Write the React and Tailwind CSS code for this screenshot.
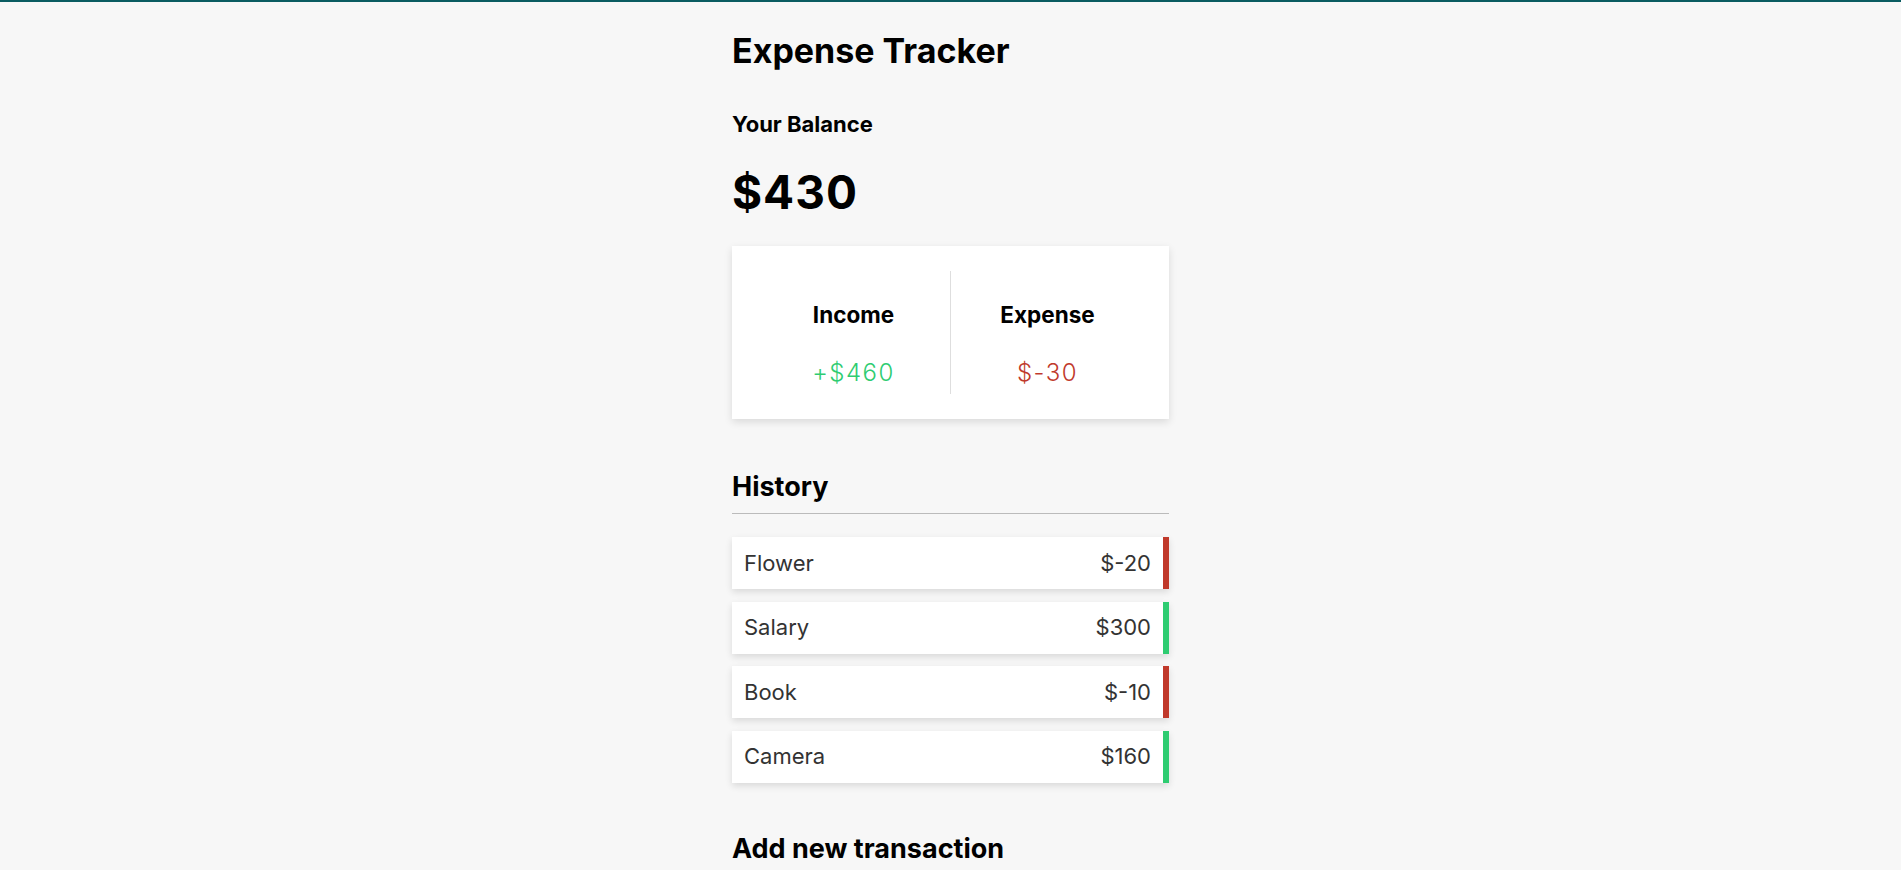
import React from 'react';

const transactions = [
  { id: 1, text: 'Flower', amount: -20 },
  { id: 2, text: 'Salary', amount: 300 },
  { id: 3, text: 'Book', amount: -10 },
  { id: 4, text: 'Camera', amount: 160 },
];

const TransactionRow = ({ text, amount }) => (
  <li
    className={`flex h-[52px] items-center justify-between bg-white pl-[12px] pr-[12px] text-[22px] text-[#333] shadow-[0_3px_7px_rgba(0,0,0,0.12)] border-r-[6px] ${
      amount < 0 ? 'border-[#c0392b]' : 'border-[#2ecc71]'
    }`}
  >
    <span>{text}</span>
    <span>${amount}</span>
  </li>
);

export default function App() {
  return (
    <div
      className="min-h-screen border-t-2 border-[#0a5c61] bg-[#f7f7f7] text-black"
      style={{ fontFamily: 'Inter, "Noto Sans", sans-serif' }}
    >
      <div className="mx-auto flex w-[437px] flex-col pb-10 pt-[32px]">
        <h2 className="text-[34px] font-bold leading-[34px]">Expense Tracker</h2>

        <h4 className="mt-[45px] text-[22px] font-bold leading-[22px]">Your Balance</h4>
        <h1 className="mt-[34px] text-[46px] font-bold leading-[46px] tracking-[1px]">$430</h1>

        <div className="mt-[31px] flex h-[173px] items-center bg-white px-[25px] shadow-[0_3px_8px_rgba(0,0,0,0.12)]">
          <div className="flex h-[123px] flex-1 flex-col items-center pt-[32px]">
            <h4 className="text-[22.5px] font-bold leading-[23px]">Income</h4>
            <p className="mt-[35px] text-[24px] font-light leading-[24px] tracking-[1.5px] text-[#2ecc71]">+$460</p>
          </div>
          <div className="h-[123px] w-px bg-[#dedede]" />
          <div className="flex h-[123px] flex-1 flex-col items-center pt-[32px]">
            <h4 className="text-[22.5px] font-bold leading-[23px]">Expense</h4>
            <p className="mt-[35px] text-[24px] font-light leading-[24px] tracking-[1.5px] text-[#c0392b]">$-30</p>
          </div>
        </div>

        <h3 className="mt-[54px] border-b border-[#bbb] pb-[13px] text-[27px] font-bold leading-[27px]">History</h3>
        <ul className="mt-[23px] flex flex-col gap-[12.5px]">
          {transactions.map((t) => (
            <TransactionRow key={t.id} text={t.text} amount={t.amount} />
          ))}
        </ul>

        <h3 className="mt-[52px] text-[27px] font-bold leading-[27px]">Add new transaction</h3>
        <form className="mt-[20px] flex flex-col gap-4">
          <div className="flex flex-col gap-2">
            <label className="text-[22px]">Text</label>
            <input className="border border-[#dedede] bg-white p-3 text-[20px]" placeholder="Enter text..." />
          </div>
          <div className="flex flex-col gap-2">
            <label className="text-[22px]">Amount (negative - expense, positive - income)</label>
            <input className="border border-[#dedede] bg-white p-3 text-[20px]" placeholder="Enter amount..." />
          </div>
          <button type="button" className="bg-[#9c88ff] p-3 text-[20px] text-white">Add transaction</button>
        </form>
      </div>
    </div>
  );
}
